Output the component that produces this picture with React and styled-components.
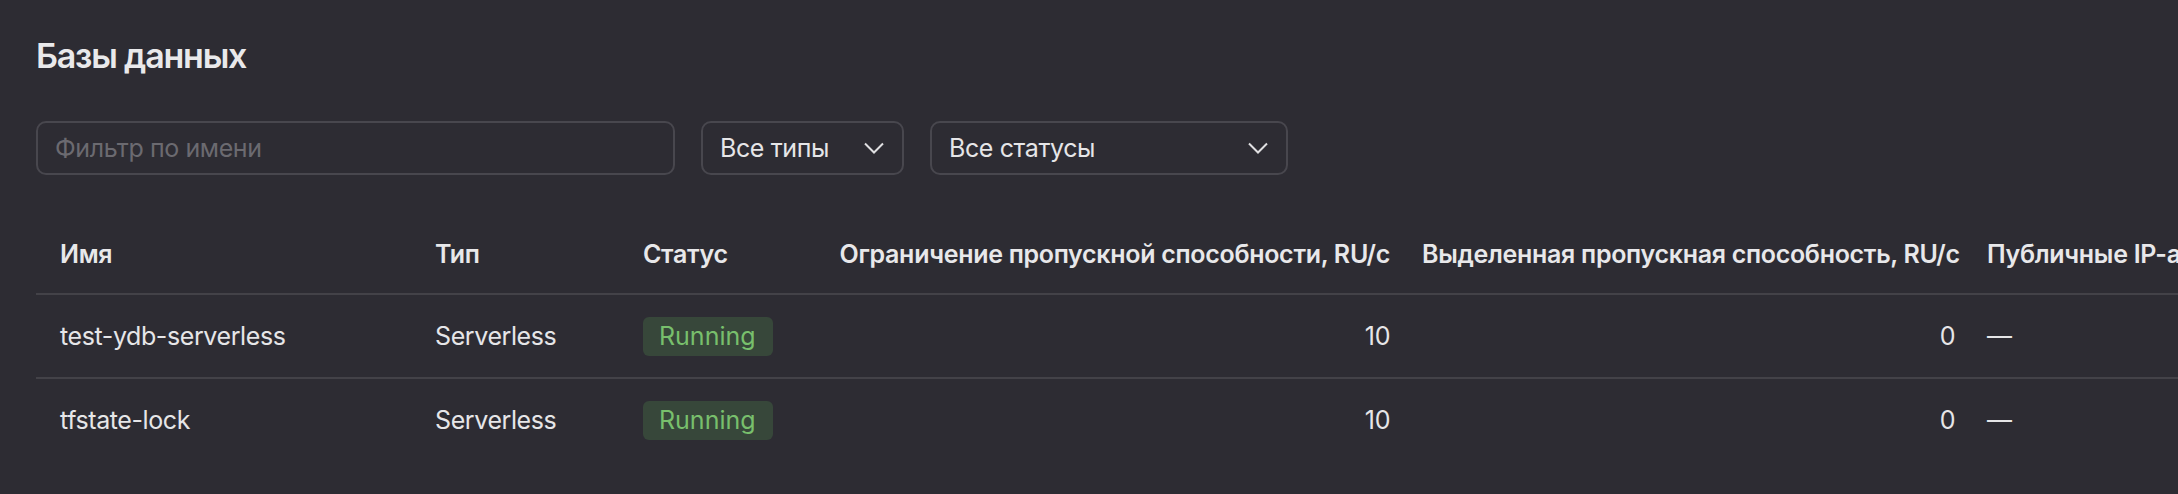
import React from 'react';
import styled, { createGlobalStyle } from 'styled-components';

const GlobalStyle = createGlobalStyle`
    html, body {
        margin: 0;
        padding: 0;
        background-color: #2d2c33;
        overflow: hidden;
    }
    body {
        font-family: Inter, "Noto Sans", sans-serif;
        color: #e6e6e8;
    }
`;

const Page = styled.div`
    box-sizing: border-box;
    min-height: 494px;
    padding: 32px 0 0 36px;
    background-color: #2d2c33;
`;

const Title = styled.h1`
    margin: 0;
    font-size: 34px;
    line-height: 48px;
    font-weight: 600;
    letter-spacing: -1.2px;
    color: #e9e9eb;
`;

const Toolbar = styled.div`
    display: flex;
    gap: 26px;
    margin-top: 41px;
`;

const Field = styled.div`
    box-sizing: border-box;
    width: ${props => props.$width}px;
    height: 54px;
    display: flex;
    align-items: center;
    justify-content: space-between;
    padding: 0 18px 0 17px;
    border: 2px solid #48474e;
    border-radius: 10px;
    font-size: 25px;
    letter-spacing: -0.4px;
    color: ${props => props.$placeholder ? '#6b6a70' : '#e6e6e8'};
`;

const Chevron = () => (
    <svg width="20" height="12" viewBox="0 0 20 12" fill="none">
        <path d="M1 1.5 L10 10.5 L19 1.5" stroke="#e0e0e2" strokeWidth="2" />
    </svg>
);

const Table = styled.table`
    margin-top: 40px;
    border-collapse: collapse;
    table-layout: fixed;
    width: 2300px;
    font-size: 25px;
    letter-spacing: -0.4px;
`;

const HeadCell = styled.th`
    height: 78px;
    padding: 0 16px;
    padding-left: ${props => props.$first ? '24px' : '16px'};
    text-align: ${props => props.$right ? 'right' : 'left'};
    font-weight: 600;
    letter-spacing: -0.3px;
    white-space: nowrap;
    border-bottom: 2px solid #434248;
    color: #e8e8ea;
`;

const Row = styled.tr`
    border-bottom: ${props => props.$last ? 'none' : '2px solid #434248'};
`;

const Cell = styled.td`
    height: 82px;
    padding: 0 16px;
    padding-left: ${props => props.$first ? '24px' : '16px'};
    text-align: ${props => props.$right ? 'right' : 'left'};
    white-space: nowrap;
    color: #e6e6e8;
`;

const Badge = styled.span`
    display: inline-flex;
    align-items: center;
    height: 39px;
    padding: 0 17px 0 16px;
    border-radius: 6px;
    letter-spacing: 0;
    background-color: #37473a;
    color: #78bf6c;
`;

const columns = [
    { title: 'Имя', width: 383, first: true },
    { title: 'Тип', width: 208 },
    { title: 'Статус', width: 196 },
    { title: 'Ограничение пропускной способности, RU/с', width: 583, right: true },
    { title: 'Выделенная пропускная способность, RU/с', width: 565, right: true },
    { title: 'Публичные IP-адреса', width: 400 },
];

const databases = [
    { name: 'test-ydb-serverless', type: 'Serverless', status: 'Running', limit: 10, allocated: 0 },
    { name: 'tfstate-lock', type: 'Serverless', status: 'Running', limit: 10, allocated: 0 },
];

const App = () => {
    return (
        <>
            <GlobalStyle />
            <Page>
                <Title>Базы данных</Title>
                <Toolbar>
                    <Field $width={639} $placeholder>Фильтр по имени</Field>
                    <Field $width={203}>Все типы <Chevron /></Field>
                    <Field $width={358}>Все статусы <Chevron /></Field>
                </Toolbar>
                <Table>
                    <colgroup>
                        {columns.map(col => <col key={col.title} style={{ width: col.width }} />)}
                    </colgroup>
                    <thead>
                        <tr>
                            {columns.map(col => (
                                <HeadCell key={col.title} $first={col.first} $right={col.right}>
                                    {col.title}
                                </HeadCell>
                            ))}
                        </tr>
                    </thead>
                    <tbody>
                        {databases.map((db, i) => (
                            <Row key={db.name} $last={i === databases.length - 1}>
                                <Cell $first>{db.name}</Cell>
                                <Cell>{db.type}</Cell>
                                <Cell><Badge>{db.status}</Badge></Cell>
                                <Cell $right>{db.limit}</Cell>
                                <Cell $right>{db.allocated}</Cell>
                                <Cell>—</Cell>
                            </Row>
                        ))}
                    </tbody>
                </Table>
            </Page>
        </>
    );
};

export default App;
